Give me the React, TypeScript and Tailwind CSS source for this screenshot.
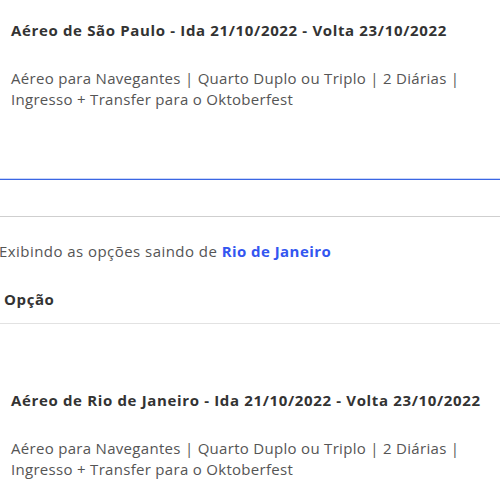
const option = {
  details: "Aéreo para Navegantes | Quarto Duplo ou Triplo | 2 Diárias | Ingresso + Transfer para o Oktoberfest",
};

function Package({ origin }: { origin: string }) {
  return (
    <div className="px-[11px]">
      <h3 className="text-[15px] font-bold leading-5 tracking-[0.65px] text-[#333]">
        Aéreo de {origin} - Ida 21/10/2022 - Volta 23/10/2022
      </h3>
      <p className="mt-[28px] text-[15px] leading-[21px] tracking-[0.3px] text-[#555]">{option.details}</p>
    </div>
  );
}

export default function App() {
  return (
    <div className="h-[485px] w-[500px] overflow-hidden bg-white font-['Open_Sans',sans-serif]">
      <div className="h-[178px] pt-[20px]">
        <Package origin="São Paulo" />
      </div>
      <div className="h-px bg-[#c9d6f8]" />
      <div className="h-px bg-[#3a66e4]" />

      <div className="mt-[36px] h-px bg-[#cfcfcf]" />
      <p className="-ml-[1px] mt-[24px] text-[15px] leading-5 tracking-[0.45px] text-[#555]">
        Exibindo as opções saindo de{" "}
        <span className="font-bold text-[#3356f0]">Rio de Janeiro</span>
      </p>
      <div className="border-b border-b-[#e2e2e2] pb-[12px] pl-[4px] pt-[26px]">
        <span className="text-[15px] font-bold leading-5 tracking-[0.6px] text-[#333]">Opção</span>
      </div>

      <div className="pt-[66px]">
        <Package origin="Rio de Janeiro" />
      </div>
    </div>
  );
}
